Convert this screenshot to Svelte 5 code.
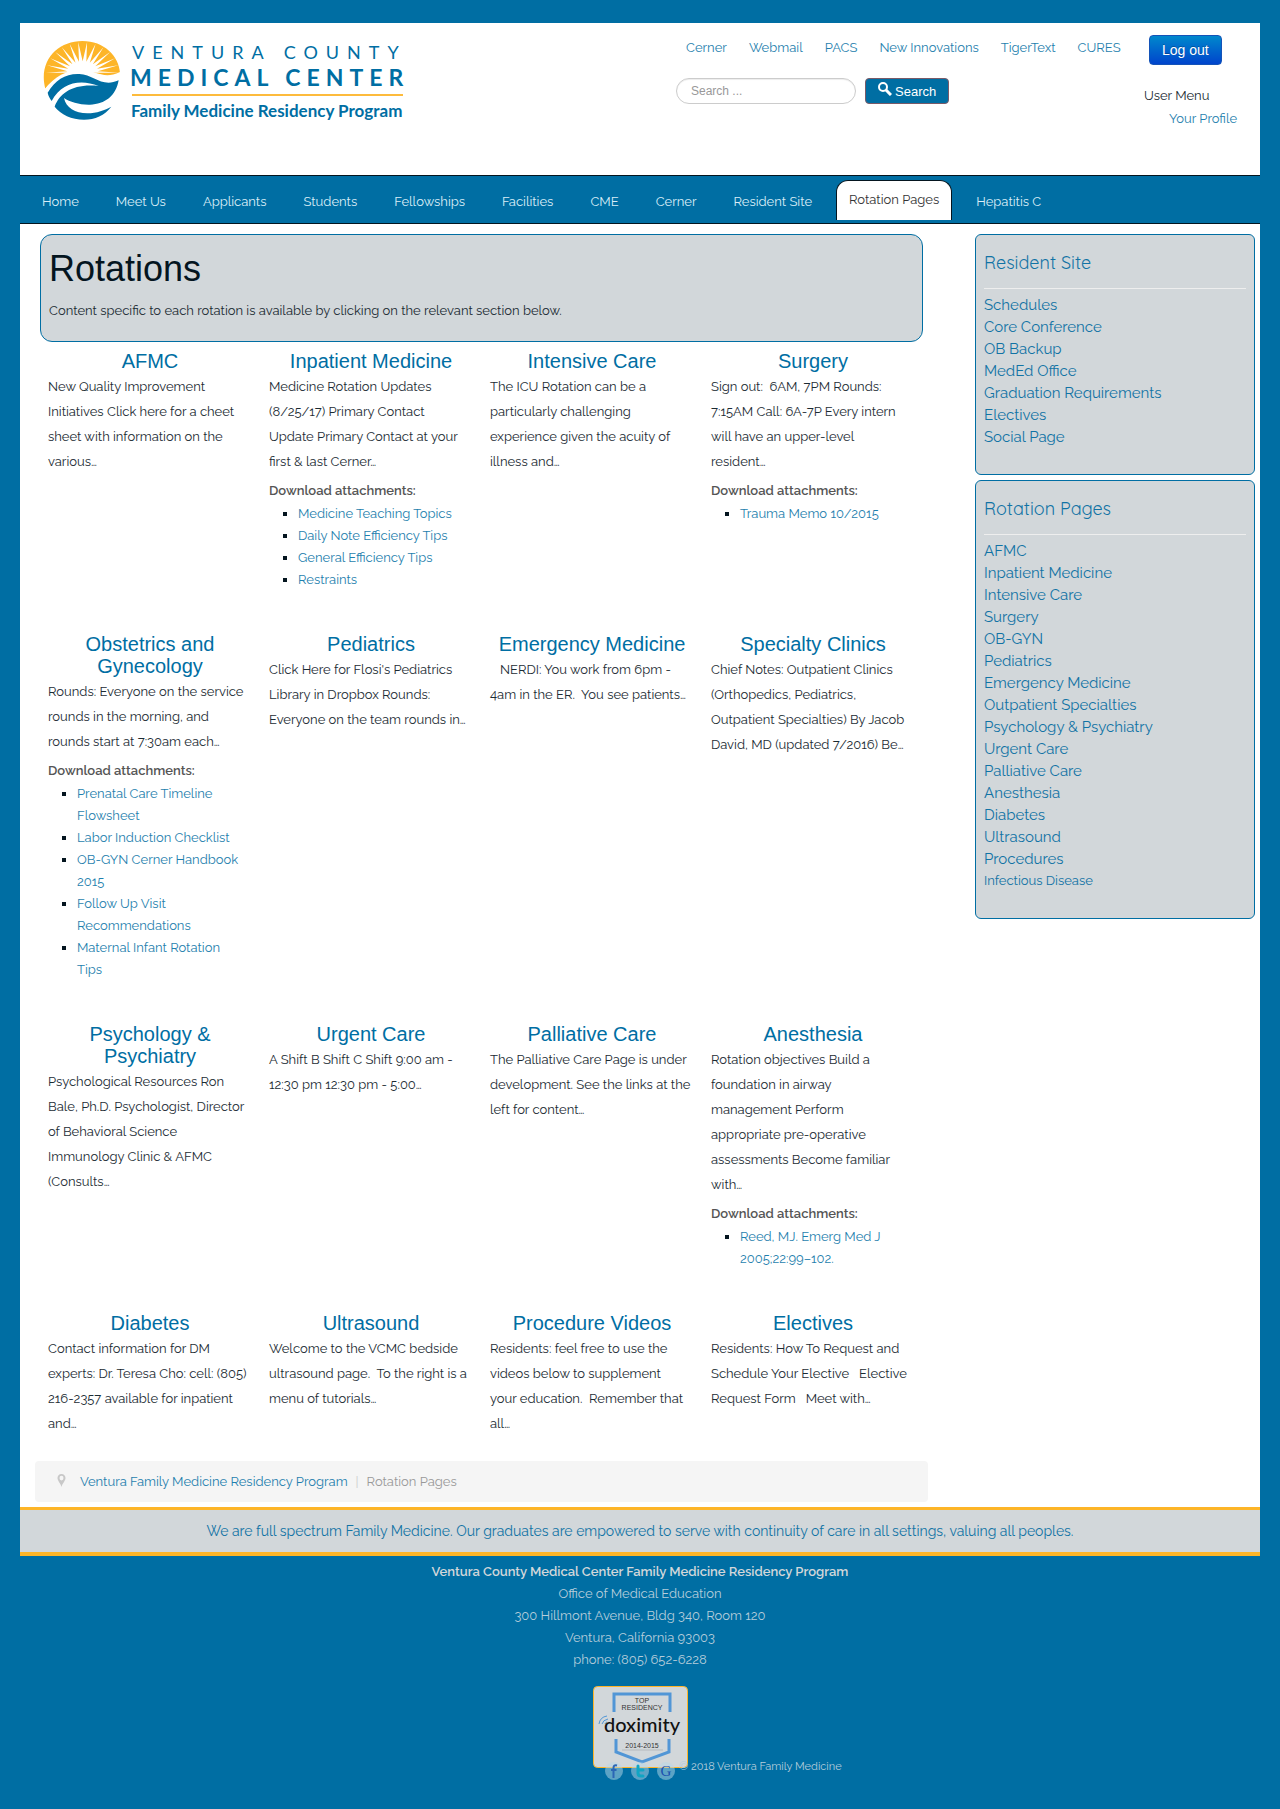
<script>
  const quickLinks = ['Cerner', 'Webmail', 'PACS', 'New Innovations', 'TigerText', 'CURES'];
  const navLinks = ['Home', 'Meet Us', 'Applicants', 'Students', 'Fellowships', 'Facilities', 'CME', 'Cerner', 'Resident Site', 'Rotation Pages', 'Hepatitis C'];
  const activeLink = 'Rotation Pages';

  const rotations = [
    { title: 'AFMC', text: 'New Quality Improvement\nInitiatives Click here for a cheet\nsheet with information on the\nvarious…' },
    {
      title: 'Inpatient Medicine',
      text: 'Medicine Rotation Updates\n(8/25/17) Primary Contact\nUpdate Primary Contact at your\nfirst & last Cerner…',
      files: ['Medicine Teaching Topics', 'Daily Note Efficiency Tips', 'General Efficiency Tips', 'Restraints']
    },
    { title: 'Intensive Care', text: 'The ICU Rotation can be a\nparticularly challenging\nexperience given the acuity of\nillness and…' },
    {
      title: 'Surgery',
      text: 'Sign out:\u00a0 6AM, 7PM Rounds:\n7:15AM Call: 6A-7P Every intern\nwill have an upper-level\nresident…',
      files: ['Trauma Memo 10/2015']
    },
    {
      title: 'Obstetrics and Gynecology',
      text: 'Rounds: Everyone on the service\nrounds in the morning, and\nrounds start at 7:30am each…',
      files: ['Prenatal Care Timeline\nFlowsheet', 'Labor Induction Checklist', 'OB-GYN Cerner Handbook\n2015', 'Follow Up Visit\nRecommendations', 'Maternal Infant Rotation\nTips']
    },
    { title: 'Pediatrics', text: "Click Here for Flosi's Pediatrics\nLibrary in Dropbox Rounds:\nEveryone on the team rounds in…" },
    { title: 'Emergency Medicine', text: '\u00a0\u00a0 NERDI: You work from 6pm -\n4am in the ER.\u00a0 You see patients…' },
    { title: 'Specialty Clinics', text: 'Chief Notes: Outpatient Clinics\n(Orthopedics, Pediatrics,\nOutpatient Specialties) By Jacob\nDavid, MD (updated 7/2016) Be…' },
    { title: 'Psychology & Psychiatry', text: 'Psychological Resources Ron\nBale, Ph.D. Psychologist, Director\nof Behavioral Science\nImmunology Clinic & AFMC\n(Consults…' },
    { title: 'Urgent Care', text: 'A Shift B Shift C Shift 9:00 am -\n12:30 pm 12:30 pm - 5:00…' },
    { title: 'Palliative Care', text: 'The Palliative Care Page is under\ndevelopment. See the links at the\nleft for content…' },
    {
      title: 'Anesthesia',
      text: 'Rotation objectives Build a\nfoundation in airway\nmanagement Perform\nappropriate pre-operative\nassessments Become familiar\nwith…',
      files: ['Reed, MJ. Emerg Med J\n2005;22:99–102.']
    },
    { title: 'Diabetes', text: 'Contact information for DM\nexperts: Dr. Teresa Cho: cell: (805)\n216-2357 available for inpatient\nand…' },
    { title: 'Ultrasound', text: 'Welcome to the VCMC bedside\nultrasound page.\u00a0 To the right is a\nmenu of tutorials…' },
    { title: 'Procedure Videos', text: 'Residents: feel free to use the\nvideos below to supplement\nyour education.\u00a0 Remember that\nall…' },
    { title: 'Electives', text: 'Residents: How To Request and\nSchedule Your Elective\u00a0\u00a0 Elective\nRequest Form\u00a0\u00a0 Meet with…' }
  ];

  const sideMenus = [
    { title: 'Resident Site', links: ['Schedules', 'Core Conference', 'OB Backup', 'MedEd Office', 'Graduation Requirements', 'Electives', 'Social Page'] },
    {
      title: 'Rotation Pages',
      links: ['AFMC', 'Inpatient Medicine', 'Intensive Care', 'Surgery', 'OB-GYN', 'Pediatrics', 'Emergency Medicine', 'Outpatient Specialties', 'Psychology & Psychiatry', 'Urgent Care', 'Palliative Care', 'Anesthesia', 'Diabetes', 'Ultrasound', 'Procedures', 'Infectious Disease'],
      small: 'Infectious Disease'
    }
  ];

  // Sunburst of the logo: thin white rays fanned over the upper half of the disc.
  const rays = Array.from({ length: 27 }, (_, i) => {
    const angle = Math.PI + (i * Math.PI) / 26;
    const [rx, ry] = i % 2 ? [46, 34] : [110, 93];
    return `${(138 + rx * Math.cos(angle)).toFixed(1)},${(120 + ry * Math.sin(angle)).toFixed(1)}`;
  }).join(' ');

  let query = $state('');
</script>

<div class="page">
  <header class="masthead">
    <a class="logo" href="#home" aria-label="Ventura County Medical Center Family Medicine Residency Program">
      <svg viewBox="0 0 376 90" width="376" height="90">
        <g transform="translate(-4 -3) scale(0.3333)">
          <g transform="translate(2 2)">
            <path fill="#fdb528" d="M26 168C4 86 62 25 137 25C202 25 248 70 250 122C205 148 185 112 130 114C85 116 50 140 26 168Z" />
            <polygon fill="#fff" points={rays} />
            <path fill="#fff" d="M22 172C55 130 90 113 130 113C180 113 200 142 250 118V134C200 156 178 124 130 124C85 126 55 145 32 182Z" />
            <path fill="#006ea3" d="M33 180C55 142 88 122 128 124C172 126 195 166 246 143C238 190 205 215 160 216C130 217 100 208 82 196C88 225 115 242 152 242C180 242 205 232 224 222C204 248 175 261 142 261C105 261 72 245 54 222C70 180 110 152 186 160C130 138 75 150 45 205C40 198 35 190 33 180Z" />
          </g>
        </g>
        <text class="logo-top" x="92" y="24">VENTURA COUNTY</text>
        <text class="logo-mid" x="90" y="51">MEDICAL CENTER</text>
        <path d="M92 60H363" stroke="#fdbb3c" stroke-width="2" />
        <text class="logo-low" x="91" y="82">Family Medicine Residency Program</text>
      </svg>
    </a>
    <div class="tools">
      <nav class="quick" aria-label="Quick links">
        {#each quickLinks as link}<a href="#quick">{link}</a>{/each}
      </nav>
      <form class="search" onsubmit={(event) => event.preventDefault()}>
        <input type="text" aria-label="Search" placeholder="Search ..." bind:value={query} />
        <button type="submit">
          <svg viewBox="0 0 14 14" width="14" height="14" fill="none" stroke="currentColor" aria-hidden="true">
            <circle cx="5" cy="5" r="4" stroke-width="2" />
            <path d="M8 8l5 5" stroke-width="3" />
          </svg>
          Search
        </button>
      </form>
    </div>
    <div class="account">
      <button type="button">Log out</button>
      <p>User Menu</p>
      <a href="#profile">Your Profile</a>
    </div>
  </header>

  <nav class="mainnav" aria-label="Main">
    {#each navLinks as link}
      <a href="#nav" class:active={link === activeLink}>{link}</a>
    {/each}
  </nav>

  <div class="body">
    <main>
      <section class="intro">
        <h1>Rotations</h1>
        <p>Content specific to each rotation is available by clicking on the relevant section below.</p>
      </section>
      <div class="grid">
        {#each rotations as item}
          <article>
            <h2><a href="#rotation">{item.title}</a></h2>
            <p>{item.text}</p>
            {#if item.files}
              <h3>Download attachments:</h3>
              <ul>
                {#each item.files as file}<li><a href="#file">{file}</a></li>{/each}
              </ul>
            {/if}
          </article>
        {/each}
      </div>
      <nav class="crumbs" aria-label="Breadcrumb">
        <svg viewBox="0 0 9 13" width="9" height="13" aria-hidden="true">
          <path fill="#c8c8c8" fill-rule="evenodd" d="M4.500 0C2 0 0.500 1.700 0.500 4C0.500 7 3.500 9 4.500 13C5.500 9 8.500 7 8.500 4C8.500 1.700 7 0 4.500 0ZM4.500 1.800A2 2.300 0 0 1 4.500 6.400A2 2.300 0 0 1 4.500 1.800Z" />
        </svg>
        <a href="#home">Ventura Family Medicine Residency Program</a>
        <span class="bar">|</span>
        <span>Rotation Pages</span>
      </nav>
    </main>
    <aside>
      {#each sideMenus as menu}
        <section>
          <h2>{menu.title}</h2>
          <ul>
            {#each menu.links as link}
              <li class:small={link === menu.small}><a href="#side">{link}</a></li>
            {/each}
          </ul>
        </section>
      {/each}
    </aside>
  </div>

  <p class="tagline">We are full spectrum Family Medicine. Our graduates are empowered to serve with continuity of care in all settings, valuing all peoples.</p>

  <footer>
    <address>
      <strong>Ventura County Medical Center Family Medicine Residency Program</strong>
      <span>Office of Medical Education</span>
      <span>300 Hillmont Avenue, Bldg 340, Room 120</span>
      <span>Ventura, California 93003</span>
      <span>phone: (805) 652-6228</span>
    </address>
    <a class="badge" href="#doximity" aria-label="Doximity top residency 2014-2015">
      <svg viewBox="0 0 95 82" width="95" height="82">
        <rect x="0.5" y="0.5" width="94" height="81" rx="4" fill="#d2d7da" stroke="#fdb528" />
        <g fill="none" stroke="#5196d6" stroke-width="3">
          <path d="M21 26V8H77V26" />
          <path d="M23 53V66L49 76L76 66V53" />
          <path stroke-width="1" d="M6 38Q7 31 14 30M9 38Q10 34 15 33M12 38Q12 37 14 36" />
        </g>
        <g fill="#333" text-anchor="middle">
          <text class="tiny" x="49" y="17">TOP</text>
          <text class="tiny" x="49" y="24">RESIDENCY</text>
          <text class="brand" x="49" y="46">doximity</text>
          <text class="tiny" x="49" y="62">2014-2015</text>
        </g>
        <path d="M29 64H70" stroke="#b5babd" stroke-width="1" />
      </svg>
    </a>
    <div class="legal">
      <a href="#facebook" aria-label="Facebook">
        <svg viewBox="0 0 18 18" width="18" height="18"><circle cx="9" cy="9" r="9" fill="#b8d8e8" opacity="0.5" /><path d="M12 3.500Q8.500 2.500 8.500 6V16M6 8H11.500" fill="none" stroke="#2b66b5" stroke-width="2" /></svg>
      </a>
      <a href="#twitter" aria-label="Twitter">
        <svg viewBox="0 0 18 18" width="18" height="18"><circle cx="9" cy="9" r="9" fill="#b8d8e8" opacity="0.5" /><path d="M7 4V11Q7 14 10 14H12M7 8H12" fill="none" stroke="#10a5c4" stroke-width="3" stroke-linecap="round" /></svg>
      </a>
      <a href="#google" aria-label="Google">
        <svg viewBox="0 0 18 18" width="18" height="18"><circle cx="9" cy="9" r="9" fill="#b8d8e8" opacity="0.5" /><text class="letter" x="9" y="14" text-anchor="middle">G</text></svg>
      </a>
      <small>© 2018 Ventura Family Medicine</small>
    </div>
  </footer>
</div>

<style>
  :global(body) {
    background: #006ea3;
  }
  :global(*) {
    box-sizing: border-box;
  }
  .page {
    padding: 23px 20px 0;
    font: 13px/22px Raleway, 'Open Sans', sans-serif;
    color: #1b2b33;
  }
  a {
    color: #1f7fae;
    text-decoration: none;
  }
  h1, h2, h3, p, ul {
    margin: 0;
    padding: 0;
    font-weight: 400;
  }
  .masthead {
    display: grid;
    grid-template-columns: 656fr 468fr 116fr;
    align-items: start;
    min-height: 152px;
    padding-top: 12px;
    background: #fff;
  }
  .logo {
    padding-left: 20px;
  }
  .logo svg, .badge svg, .legal svg {
    display: block;
  }
  .logo text {
    font-family: Lato, sans-serif;
    fill: #006ea3;
  }
  .logo .logo-top {
    font-size: 18px;
    letter-spacing: 8px;
  }
  .logo .logo-mid {
    font-size: 23px;
    font-weight: 700;
    letter-spacing: 6px;
  }
  .logo .logo-low {
    font-size: 17px;
    font-weight: 700;
  }
  .quick {
    display: flex;
    gap: 22px;
    padding: 2px 0 0 10px;
  }
  .search {
    display: flex;
    gap: 9px;
    margin-top: 19px;
  }
  .search input {
    width: 180px;
    height: 26px;
    padding: 0 14px;
    border: 1px solid #ccc;
    border-radius: 13px;
    box-shadow: inset 0 1px 1px rgba(0, 0, 0, 0.075);
    font: 12px 'Liberation Sans', sans-serif;
  }
  .search input::placeholder {
    color: #999;
  }
  .search button {
    display: flex;
    align-items: center;
    gap: 3px;
    height: 26px;
    padding: 0 12px;
    border: 1px solid #7a5a68;
    border-radius: 4px;
    background: #006ea3;
    color: #fff;
    font: 13px 'Liberation Sans', sans-serif;
  }
  .search button svg {
    margin-bottom: 4px;
  }
  .account button {
    display: block;
    height: 30px;
    margin-left: 5px;
    padding: 0 12px;
    border: 1px solid #1453b8;
    border-radius: 4px;
    background: linear-gradient(#08c, #04c);
    color: #fff;
    font: 14px 'Liberation Sans', sans-serif;
    text-shadow: 0 -1px 0 rgba(0, 0, 0, 0.25);
  }
  .account p {
    padding: 20px 0 1px;
  }
  .account a {
    padding-left: 25px;
  }
  .mainnav {
    display: flex;
    align-items: flex-start;
    gap: 1px;
    padding: 4px 4px 0;
    border: solid #04151f;
    border-width: 1px 0;
    background: #006ea3;
  }
  .mainnav a {
    padding: 0 18px;
    color: #d9edf7;
    line-height: 43px;
  }
  .mainnav .active {
    margin: 0 5px;
    padding: 0 12px 2px;
    border: 1px solid #04151f;
    border-bottom: 0;
    border-radius: 12px 12px 0 0;
    background: #fff;
    color: #333;
    line-height: 37px;
  }
  .body {
    display: grid;
    grid-template-columns: 1fr 280px;
    column-gap: 52px;
    padding: 10px 5px 5px 20px;
    background: #fff;
  }
  .intro {
    padding: 14px 8px 19px;
    border: 1px solid #006ea3;
    border-radius: 12px;
    background: #d2d7da;
  }
  .intro h1 {
    font: 36px/40px 'Liberation Sans', sans-serif;
    color: #04151f;
  }
  .intro p {
    padding-top: 11px;
  }
  .grid {
    display: grid;
    grid-template-columns: repeat(4, 1fr);
    gap: 42px 17px;
    padding: 8px 8px 25px;
  }
  .grid h2 {
    padding-bottom: 2px;
    font: 20px/22px 'Liberation Sans', sans-serif;
    text-align: center;
  }
  .grid h2 a {
    color: #006ea3;
  }
  .grid p, .grid li {
    white-space: pre-line;
  }
  .grid p {
    margin-right: -8px;
    line-height: 25px;
  }
  .grid h3 {
    padding-top: 6px;
    font-size: 13px;
    font-weight: 600;
    color: #555;
  }
  .grid ul {
    padding: 1px 0 0 29px;
    list-style: square;
  }
  .grid li::marker {
    color: #04151f;
  }
  .crumbs {
    display: flex;
    align-items: center;
    gap: 8px;
    min-height: 41px;
    margin: 0 -5px;
    padding: 0 22px;
    border-radius: 4px;
    background: #f5f5f5;
    color: #999;
  }
  .crumbs svg {
    margin: 0 6px 3px 0;
  }
  .crumbs .bar {
    color: #ccc;
  }
  aside section {
    margin-bottom: 5px;
    padding: 17px 8px 26px;
    border: 1px solid #006ea3;
    border-radius: 6px;
    background: #d2d7da;
  }
  aside h2 {
    margin-bottom: 5px;
    padding-bottom: 14px;
    border-bottom: 1px solid #eee;
    color: #1173a5;
    font: 18px/22px Quicksand, 'Open Sans', sans-serif;
  }
  aside ul {
    list-style: none;
  }
  aside li {
    font-size: 15px;
  }
  aside li.small {
    font-size: 13px;
  }
  aside a {
    color: #1173a5;
  }
  .tagline {
    border: solid #fdb528;
    border-width: 3px 0 4px;
    background: #d2d7da;
    color: #1173a5;
    font-size: 14px;
    line-height: 42px;
    text-align: center;
  }
  footer {
    padding: 5px 0 29px;
    color: #b6cddb;
  }
  address {
    display: flex;
    flex-direction: column;
    font-style: normal;
    text-align: center;
  }
  address strong {
    font-weight: 600;
    color: #d2d7da;
  }
  .badge {
    display: block;
    width: 95px;
    margin: 15px auto 0;
  }
  .badge .tiny {
    font: 7px 'Liberation Sans', sans-serif;
  }
  .badge .brand {
    font: 500 20px Lato, sans-serif;
    fill: #111;
  }
  .legal {
    position: relative;
    display: flex;
    align-items: center;
    gap: 8px;
    margin: -6px 0 0 calc(50% - 35px);
  }
  .legal .letter {
    font: 15px 'Liberation Serif', serif;
    fill: #1b4fae;
  }
  .legal small {
    margin: 0 0 8px -4px;
    font-size: 11px;
    line-height: 10px;
  }
</style>
